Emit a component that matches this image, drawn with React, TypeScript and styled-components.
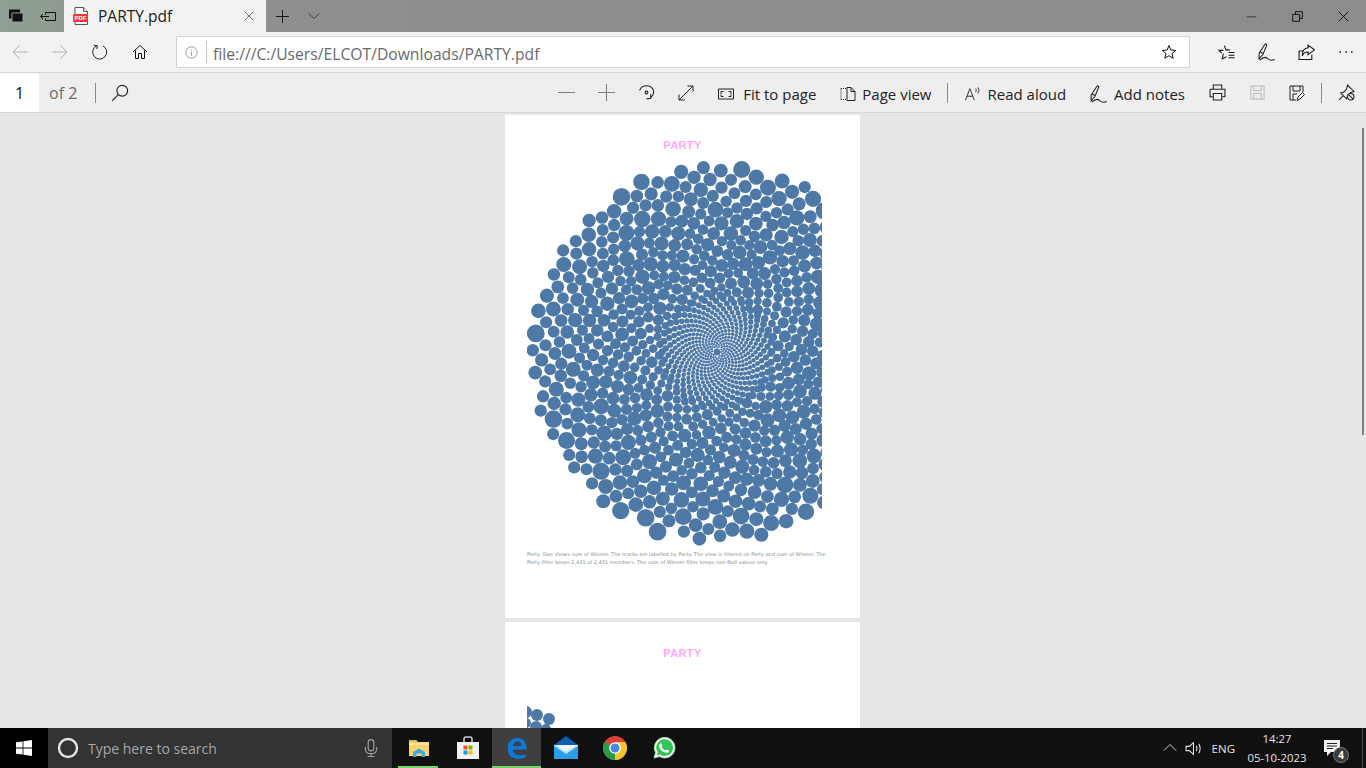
import * as React from 'react';
import styled, { createGlobalStyle } from 'styled-components';

// --- Styled Components ---

const GlobalStyle = createGlobalStyle`
  html, body {
    margin: 0;
    padding: 0;
    height: 100%;
    overflow: hidden;
    background: #e6e6e6;
  }
  * { box-sizing: border-box; }
`;

const Screen = styled.div`
  width: 1366px;
  height: 768px;
  display: flex;
  flex-direction: column;
  overflow: hidden;
  font-family: "Open Sans", "Noto Sans", sans-serif;
`;

const TitleBar = styled.div`
  height: 32px;
  flex: none;
  display: flex;
  align-items: stretch;
  background: linear-gradient(90deg, #8f9f92 0, #8f9b90 64px, #8e8e8e 300px, #8c8c8c 100%);
`;

const TabButton = styled.div<{ $w?: number }>`
  width: ${p => p.$w ?? 32}px;
  display: flex;
  align-items: center;
  justify-content: center;
  flex: none;
`;

const Tab = styled.div`
  width: 202px;
  background: #f2f2f2;
  display: flex;
  align-items: center;
  padding: 0 11px 0 9px;
  flex: none;
`;

const TabTitle = styled.span`
  margin-left: 9px;
  font-size: 15.5px;
  color: #222;
  flex: 1;
`;

const WindowControls = styled.div`
  margin-left: auto;
  display: flex;
`;

const NavBar = styled.div`
  height: 41px;
  flex: none;
  background: #f2f2f2;
  display: flex;
  align-items: center;
  border-bottom: 1px solid #d4d4d4;
`;

const NavButton = styled.div`
  width: 40px;
  height: 32px;
  flex: none;
  display: flex;
  align-items: center;
  justify-content: center;
`;

const AddressBox = styled.div`
  width: 1014px;
  height: 32px;
  flex: none;
  margin-left: 16px;
  margin-right: 16px;
  background: #fff;
  border: 1px solid #d2d2d2;
  display: flex;
  align-items: center;
  padding: 0 12px 0 8px;
`;

const AddressDivider = styled.div`
  width: 1px;
  height: 22px;
  background: #c4c4c4;
  margin: 0 6px 0 8px;
`;

const AddressText = styled.span`
  flex: 1;
  padding-top: 3px;
  font-size: 15.7px;
  color: #6a6a6a;
`;

const PdfBar = styled.div`
  height: 40px;
  flex: none;
  background: #eeeeee;
  display: flex;
  align-items: stretch;
  border-bottom: 1px solid #d6d6d6;
`;

const PageInput = styled.div`
  width: 39px;
  background: #fff;
  display: flex;
  align-items: center;
  justify-content: center;
  font-size: 16px;
  color: #111;
`;

const PageCount = styled.span`
  align-self: center;
  margin-left: 10px;
  font-size: 16px;
  color: #6b6b6b;
`;

const BarDivider = styled.div<{ $m?: string }>`
  width: 1px;
  height: 20px;
  align-self: center;
  background: #8a8a8a;
  margin: ${p => p.$m ?? '0'};
`;

const BarSpacer = styled.div`
  flex: 1;
`;

const PdfIcon = styled.div`
  width: 40px;
  flex: none;
  display: flex;
  align-items: center;
  justify-content: center;
`;

const PdfAction = styled.div<{ $l?: number; $r?: number; $gap?: number }>`
  display: flex;
  align-items: center;
  gap: ${p => p.$gap ?? 6}px;
  padding: 2px ${p => p.$r ?? 12}px 0 ${p => p.$l ?? 10}px;
  font-size: 15px;
  color: #222;
  flex: none;
`;

const Viewer = styled.main`
  position: relative;
  flex: 1;
  min-height: 0;
  background: #e6e6e6;
  display: flex;
  flex-direction: column;
  align-items: center;
  gap: 4px;
  padding: 2px 1px 0 0;
  overflow: hidden;
`;

const Scrollbar = styled.div`
  position: absolute;
  top: 15px;
  right: 2px;
  width: 2px;
  height: 307px;
  background: #808080;
`;

const Sheet = styled.section<{ $pad: number }>`
  width: 355px;
  height: 503px;
  flex: none;
  background: #fff;
  padding-top: ${p => p.$pad}px;
  display: flex;
  flex-direction: column;
`;

const SheetTitle = styled.h1`
  margin: 0;
  height: 11px;
  line-height: 11px;
  text-align: center;
  font-family: "Liberation Sans", Arial, sans-serif;
  font-weight: 700;
  font-size: 11px;
  letter-spacing: 0.4px;
  color: #ffa8ff;
`;

const ChartFrame = styled.div<{ $top: number; $h: number }>`
  width: 295px;
  height: ${p => p.$h}px;
  margin: ${p => p.$top}px 0 0 22px;
  flex: none;
  overflow: hidden;
`;

const Caption = styled.p`
  margin: 3px 0 0 22px;
  width: 310px;
  font-family: "DejaVu Sans", sans-serif;
  font-size: 5.05px;
  line-height: 8px;
  color: #8e8e8e;
`;

const Taskbar = styled.footer`
  height: 40px;
  flex: none;
  background: #101010;
  display: flex;
  align-items: stretch;
  color: #eee;
`;

const StartButton = styled.div`
  width: 48px;
  background: #000;
  display: flex;
  align-items: center;
  justify-content: center;
`;

const SearchBox = styled.div`
  width: 344px;
  margin-right: 2px;
  background: #333333;
  display: flex;
  align-items: center;
  padding: 0 12px 0 9px;
  flex: none;
`;

const SearchText = styled.span`
  flex: 1;
  margin-left: 9px;
  font-size: 14px;
  color: #a6a6a6;
`;

const TaskSlot = styled.div<{ $open?: boolean; $active?: boolean }>`
  position: relative;
  width: 49px;
  flex: none;
  display: flex;
  align-items: center;
  justify-content: center;
  background: ${p => (p.$active ? '#3f3f3f' : 'transparent')};
  &::after {
    content: '';
    display: ${p => (p.$open ? 'block' : 'none')};
    position: absolute;
    bottom: 0;
    left: ${p => (p.$active ? 0 : 4)}px;
    right: ${p => (p.$active ? 0 : 5)}px;
    height: 2px;
    background: #76d466;
  }
`;

const Tray = styled.div`
  margin-left: auto;
  display: flex;
  align-items: center;
  padding-right: 10px;
`;

const TrayChevron = styled.div`
  width: 14px;
  margin-right: 2px;
  display: flex;
`;

const TrayText = styled.span`
  font-size: 11.5px;
  color: #e6e6e6;
  margin: 0 9px 0 3px;
`;

const Clock = styled.div`
  width: 66px;
  text-align: center;
  font-size: 11.3px;
  line-height: 19px;
  color: #e6e6e6;
`;

const TrayBell = styled.div`
  position: relative;
  width: 46px;
  height: 40px;
  display: flex;
  align-items: center;
  justify-content: center;
`;

const ShowDesktop = styled.div`
  position: absolute;
  right: 3px;
  bottom: 0;
  width: 1px;
  height: 40px;
  background: #4a4a4a;
`;

const Badge = styled.span`
  position: absolute;
  left: 23px;
  top: 19px;
  width: 16px;
  height: 16px;
  border-radius: 50%;
  background: #3a3a3a;
  border: 1px solid #777;
  display: flex;
  align-items: center;
  justify-content: center;
  font-size: 10px;
  font-weight: 700;
  color: #fff;
`;

// --- Icons ---

type IconProps = { size?: number; color?: string; children: React.ReactNode; w?: number };

const Line = ({ size = 16, color = '#222', w = 1, children }: IconProps) => (
  <svg width={size} height={size} viewBox="0 0 16 16" fill="none" stroke={color} strokeWidth={w}>
    {children}
  </svg>
);

const PenIcon = ({ color = '#222' }: { color?: string }) => (
  <Line size={20} color={color} w={0.85}>
    <path d="M2.5 13.5 L2.5 9 L7 2 Q8.5 0.8 8.6 2.5 L5.5 10 L2.5 13.5 Z M3.6 8 L5.8 9.4" />
    <path d="M3 14.5 Q7 11 9 13 Q11 15.5 15 14" />
  </Line>
);

const StarPath = 'M8 1.5 L9.9 6 L14.7 6.4 L11 9.5 L12.2 14.3 L8 11.7 L3.8 14.3 L5 9.5 L1.3 6.4 L6.1 6 Z';

const PdfFileIcon = () => (
  <svg width="16" height="18" viewBox="0 0 16 18">
    <path d="M2 .5 H10.5 L14.5 4.5 V17.5 H2 Z" fill="#fff" stroke="#555" strokeWidth="1" />
    <path d="M10.5 .5 V4.5 H14.5" fill="#eee" stroke="#555" strokeWidth="1" />
    <rect x="0" y="7" width="15" height="8" rx="1" fill="#f03a3a" />
    <text x="7.5" y="13.4" textAnchor="middle" fontFamily="Liberation Sans, sans-serif" fontWeight="700" fontSize="6" fill="#fff">
      PDF
    </text>
  </svg>
);

const WindowsLogo = () => (
  <svg width="16" height="16" viewBox="0 0 16 16" fill="#fff">
    <path d="M0 2.3 L6.6 1.4 V7.5 H0 Z M7.4 1.3 L16 0 V7.5 H7.4 Z M0 8.4 H6.6 V14.6 L0 13.7 Z M7.4 8.4 H16 V16 L7.4 14.7 Z" />
  </svg>
);

const FolderIcon = () => (
  <svg width="22" height="20" viewBox="0 0 22 20">
    <path d="M1 2 H8 L10 4 H21 V18 H1 Z" fill="#f6d36b" />
    <path d="M1 2 H8 L9 3.5 H1 Z" fill="#e0b23c" />
    <rect x="1" y="5" width="20" height="2" fill="#fbe7a2" />
    <path d="M5 19 V14 L11 10.5 L17 14 V19 H13.5 V15.5 H8.5 V19 Z" fill="#3fa9e0" />
  </svg>
);

const StoreIcon = () => (
  <svg width="24" height="24" viewBox="0 0 24 24">
    <path d="M8 7 V3 Q8 1 10 1 H14 Q16 1 16 3 V7" fill="none" stroke="#cfcfcf" strokeWidth="1.5" />
    <rect x="1" y="6" width="22" height="17" fill="#f1f1f1" />
    <rect x="7.5" y="9.5" width="4" height="4" fill="#f25022" />
    <rect x="12.5" y="9.5" width="4" height="4" fill="#7fba00" />
    <rect x="7.5" y="14.5" width="4" height="4" fill="#00a4ef" />
    <rect x="12.5" y="14.5" width="4" height="4" fill="#ffb900" />
  </svg>
);

const EdgeIcon = () => (
  <svg width="22" height="24" viewBox="0 0 22 24" fill="none">
    <path d="M2 13 C1 6 6 2 12 2 C18 2 21 7 20.5 13.5 H7 C7 18 12 21 19.5 18 V21.5 C11 25 1.5 22 2 13 Z M7.2 10 H15.5 C15.5 6.5 13 5.5 11.5 5.5 C9.5 5.5 7.8 7 7.2 10 Z" fill="#0f78d4" />
  </svg>
);

const MailIcon = () => (
  <svg width="24" height="24" viewBox="0 0 24 24">
    <path d="M0 9 L12 0 L24 9 V12 H0 Z" fill="#0a5fae" />
    <rect x="0" y="9" width="24" height="14" fill="#2a9fe6" />
    <path d="M0 9 L12 16 L24 9 V10 L12 18 L0 10 Z" fill="#bfe4fa" />
    <path d="M0 9 H24 L12 16 Z" fill="#e9f6fe" />
  </svg>
);

const ChromeIcon = () => (
  <svg width="24" height="24" viewBox="0 0 24 24">
    <circle cx="12" cy="12" r="12" fill="#dc4437" />
    <path d="M12 12 L1.6 6 A12 12 0 0 0 12 24 Z" fill="#2a9d4b" />
    <path d="M12 12 L12 24 A12 12 0 0 0 22.4 6 L12 6 Z" fill="#f7c52c" />
    <circle cx="12" cy="12" r="5.8" fill="#fff" />
    <circle cx="12" cy="12" r="4.5" fill="#4a86e8" />
  </svg>
);

const WhatsAppIcon = () => (
  <svg width="24" height="24" viewBox="0 0 24 24">
    <path d="M2 22 L3.6 16.6 A10.3 10.3 0 1 1 7.5 20.6 Z" fill="#fff" stroke="#9fd8a8" strokeWidth="1" />
    <path d="M4.6 19.4 L5.6 16.2 A8.4 8.4 0 1 1 8 18.6 Z" fill="#36c559" />
    <path d="M9 7 L10.4 9.6 L9.6 11 Q11 13.6 13.4 14.6 L15 13.6 L17.2 15 Q16.5 17.2 14 16.8 Q8 15.4 7 10 Q7 8 9 7 Z" fill="#fff" />
  </svg>
);

// --- Chart data ---

type Bubble = { x: number; y: number; r: number };

// seeded so the same picture comes out on each load
const makeRandom = (seed: number) => () => {
  seed = (seed * 1664525 + 1013904223) % 4294967296;
  return seed / 4294967296;
};

const spacingAt = (radius: number) => {
  if (radius < 40) return 2 + radius * 0.07;
  if (radius < 75) return 4.8 + (radius - 40) * 0.16;
  return Math.min(14, 10.4 + (radius - 75) * 0.03);
};

function buildBubbles(): Bubble[] {
  const random = makeRandom(71);
  const golden = Math.PI * (3 - Math.sqrt(5));
  const out: Bubble[] = [{ x: 0, y: 0, r: 3.5 }];
  let radius = 4.2;
  let angle = 0;
  while (radius < 183) {
    const s = spacingAt(radius);
    const spread = radius > 60 ? Math.pow(random(), 2.2) * 0.42 - 0.06 : 0;
    out.push({
      x: Math.cos(angle) * radius,
      y: Math.sin(angle) * radius,
      r: (s / 2) * (0.96 + spread),
    });
    radius += (s * s * 0.92) / (2 * Math.PI * radius);
    angle += golden;
  }
  // push overlapping marks apart so the outer rings lose the spiral look
  for (let pass = 0; pass < 7; pass++) {
    for (let i = 0; i < out.length; i++) {
      for (let j = i + 1; j < out.length; j++) {
        const a = out[i];
        const b = out[j];
        const dx = b.x - a.x;
        const dy = b.y - a.y;
        const reach = a.r + b.r + 0.3;
        if (Math.abs(dx) > reach || Math.abs(dy) > reach) continue;
        const d = Math.sqrt(dx * dx + dy * dy) || 1;
        if (d >= reach || Math.hypot(a.x, a.y) < 55) continue;
        const push = (reach - d) / 2 / d;
        a.x -= dx * push;
        a.y -= dy * push;
        b.x += dx * push;
        b.y += dy * push;
      }
    }
  }
  return out;
}

const bubbles = buildBubbles();

const CENTER_X = 190;
const CENTER_Y = 195;

const secondPageBubbles: Bubble[] = [
  { x: -1, y: 8, r: 6 },
  { x: 10, y: 11, r: 6 },
  { x: 22, y: 15, r: 6 },
  { x: -1, y: 19, r: 5 },
  { x: 9, y: 23, r: 6 },
  { x: 19, y: 25, r: 5 },
];

function App() {
  return (
    <Screen>
      <GlobalStyle />
      <TitleBar>
        <TabButton>
          <svg width="16" height="16" viewBox="0 0 16 16">
            <rect x="1" y="1.5" width="11" height="9" fill="#111" />
            <rect x="4" y="5" width="11" height="9" fill="#111" stroke="#8f9f92" strokeWidth="1" />
          </svg>
        </TabButton>
        <TabButton>
          <Line size={16} color="#111">
            <path d="M5.5 4.5 H15.5 V12.5 H5.5 M0.5 8.5 H9 M3 6 L0.5 8.5 L3 11 M5.5 4.5 V6.5 M5.5 10.5 V12.5" />
          </Line>
        </TabButton>
        <Tab>
          <PdfFileIcon />
          <TabTitle>PARTY.pdf</TabTitle>
          <Line size={12} color="#444">
            <path d="M2 2 L14 14 M14 2 L2 14" />
          </Line>
        </Tab>
        <TabButton>
          <Line size={15} color="#111">
            <path d="M8 1 V15 M1 8 H15" />
          </Line>
        </TabButton>
        <TabButton>
          <Line size={14} color="#333">
            <path d="M2 5 L8 11 L14 5" />
          </Line>
        </TabButton>
        <WindowControls>
          <TabButton $w={46}>
            <Line size={11} color="#111">
              <path d="M1 8.5 H15" />
            </Line>
          </TabButton>
          <TabButton $w={46}>
            <Line size={11} color="#111" w={1.4}>
              <path d="M1 5 H11 V15 H1 Z M5 5 V1 H15 V11 H11" />
            </Line>
          </TabButton>
          <TabButton $w={46}>
            <Line size={11} color="#111" w={1.4}>
              <path d="M1 1 L15 15 M15 1 L1 15" />
            </Line>
          </TabButton>
        </WindowControls>
      </TitleBar>

      <NavBar>
        <NavButton>
          <Line size={16} color="#b0b0b0">
            <path d="M15.5 8 H1 M7.5 1.5 L1 8 L7.5 14.5" />
          </Line>
        </NavButton>
        <NavButton>
          <Line size={16} color="#b0b0b0">
            <path d="M0.5 8 H15 M8.5 1.5 L15 8 L8.5 14.5" />
          </Line>
        </NavButton>
        <NavButton>
          <Line size={16} color="#222">
            <path d="M5 1.6 A7 7 0 1 0 11 1.9 M1.8 1.2 L5.3 1.6 L4.8 5" />
          </Line>
        </NavButton>
        <NavButton>
          <Line size={16} color="#111">
            <path d="M1 8 L8 1.5 L15 8 M3.5 6.5 V14.5 H6.5 V9.5 H9.5 V14.5 H12.5 V6.5" />
          </Line>
        </NavButton>
        <AddressBox>
          <Line size={13} color="#888">
            <circle cx="8" cy="8" r="7" />
            <path d="M8 7 V12 M8 4 V5.4" />
          </Line>
          <AddressDivider />
          <AddressText>file:///C:/Users/ELCOT/Downloads/PARTY.pdf</AddressText>
          <Line size={16} color="#111">
            <path d={StarPath} />
          </Line>
        </AddressBox>
        <NavButton>
          <Line size={17} color="#111">
            <path d="M6 1.5 L7.5 5.5 H11 M3.5 8.5 L1 6 H5 M5 9 L4 14 L8 12 M10 8 H15.5 M10 10.5 H15.5 M10 13 H15.5" />
          </Line>
        </NavButton>
        <NavButton>
          <PenIcon />
        </NavButton>
        <NavButton>
          <Line size={17} color="#111">
            <path d="M1 6.5 V14.5 H13 V10 M1 6.5 H5 M9.5 1 L15.5 5.5 L9.5 10 V7.5 Q5.5 7.5 4 11 Q4 4 9.5 3.5 Z" />
          </Line>
        </NavButton>
        <NavButton>
          <Line size={16} color="#111" w={1.5}>
            <path d="M1.5 8 H3 M7.3 8 H8.8 M13 8 H14.5" />
          </Line>
        </NavButton>
      </NavBar>

      <PdfBar>
        <PageInput>1</PageInput>
        <PageCount>of 2</PageCount>
        <BarDivider $m="0 4px 0 18px" />
        <PdfIcon>
          <Line size={18} color="#222">
            <circle cx="10" cy="6" r="4.8" />
            <path d="M6.5 9.5 L1 15" />
          </Line>
        </PdfIcon>
        <BarSpacer />
        <PdfIcon>
          <Line size={17} color="#808080">
            <path d="M0 8 H16" />
          </Line>
        </PdfIcon>
        <PdfIcon>
          <Line size={17} color="#808080">
            <path d="M0 8 H16 M8 0 V16" />
          </Line>
        </PdfIcon>
        <PdfIcon>
          <Line size={17} color="#222">
            <path d="M1.5 6 A7 7 0 0 1 14.5 6 Q15.5 10 12 13 M12 9.5 V13.5 L8 14" />
            <circle cx="8" cy="8" r="1.3" />
          </Line>
        </PdfIcon>
        <PdfIcon>
          <Line size={16} color="#222">
            <path d="M1 15 L15 1 M9.5 1 H15 V6.5 M1 9.5 V15 H6.5" />
          </Line>
        </PdfIcon>
        <PdfAction $l={12} $r={14} $gap={9}>
          <Line size={16} color="#222">
            <path d="M.5 3 H15.5 V13 H.5 Z" />
            <path d="M3 8 V5.5 H5.5 M10.5 5.5 H13 V8 M13 8.5 V10.5 H10.5 M5.5 10.5 H3 V8.5" />
          </Line>
          Fit to page
        </PdfAction>
        <PdfAction>
          <Line size={16} color="#222">
            <path d="M1 2.5 H6 M1 2.5 V13.5 M1 13.5 H6" strokeDasharray="1 1" />
            <path d="M7 1.5 H11 L15 5.5 V14.5 H7 Z M11 1.5 V5.5 H15" />
          </Line>
          Page view
        </PdfAction>
        <BarDivider $m="0 7px 0 4px" />
        <PdfAction>
          <svg width="16" height="16" viewBox="0 0 18 16" fill="none" stroke="#222">
            <path d="M.5 15 L5.5 2 L10.5 15 M2.2 10.5 H8.8 M12 2 Q13.5 4 12 6 M14.5 .5 Q17 4 14.5 7.5" />
          </svg>
          Read aloud
        </PdfAction>
        <PdfAction>
          <PenIcon />
          Add notes
        </PdfAction>
        <PdfIcon>
          <Line size={17} color="#222">
            <path d="M4 5 V1 H12 V5 M1 5 H15 V12 H12 M4 12 H1 V5 M4 9 H12 V15 H4 Z" />
          </Line>
        </PdfIcon>
        <PdfIcon>
          <Line size={15} color="#b4b4b4">
            <path d="M1 1 H15 V15 H1 Z M4 1 V6 H12 V1 M4 15 V9 H12 V15" />
          </Line>
        </PdfIcon>
        <PdfIcon>
          <Line size={16} color="#222">
            <path d="M1 1 H14 V7 M1 1 V15 H7 M4 1 V6 H11 V1 M4 15 V9 H8" />
            <path d="M8 15.5 L9 12 L13.5 7.5 L15.5 9.5 L11 14 Z" />
          </Line>
        </PdfIcon>
        <BarDivider $m="0 4px 0 4px" />
        <PdfIcon>
          <Line size={17} color="#222">
            <path d="M9 1 L15 7 L12 8 L9 11 L8 14 L2.5 8.5 L5.5 7.5 L8 5 Z M5 11 L1 15" />
            <circle cx="12" cy="12" r="3" fill="#eee" />
            <path d="M10 10 L14 14" />
          </Line>
        </PdfIcon>
      </PdfBar>

      <Viewer>
        <Sheet $pad={25}>
          <SheetTitle>PARTY</SheetTitle>
          <ChartFrame $top={6} $h={390}>
            <svg width="295" height="390" viewBox="0 0 295 390" fill="#4e79a7">
              {bubbles.map((b, i) => (
                <circle key={i} cx={CENTER_X + b.x} cy={CENTER_Y + b.y} r={b.r} />
              ))}
            </svg>
          </ChartFrame>
          <Caption>
            Party. Size shows sum of Winner. The marks are labelled by Party. The view is filtered on Party and sum of
            Winner. The Party filter keeps 2,431 of 2,431 members. The sum of Winner filter keeps non-Null values only.
          </Caption>
        </Sheet>
        <Sheet $pad={26}>
          <SheetTitle>PARTY</SheetTitle>
          <ChartFrame $top={45} $h={60}>
            <svg width="295" height="60" viewBox="0 0 295 60" fill="#4e79a7">
              {secondPageBubbles.map((b, i) => (
                <circle key={i} cx={b.x} cy={b.y} r={b.r} />
              ))}
            </svg>
          </ChartFrame>
        </Sheet>
        <Scrollbar />
      </Viewer>

      <Taskbar>
        <StartButton>
          <WindowsLogo />
        </StartButton>
        <SearchBox>
          <svg width="22" height="22" viewBox="0 0 22 22" fill="none" stroke="#e4e4e4" strokeWidth="2.4">
            <circle cx="11" cy="11" r="9" />
          </svg>
          <SearchText>Type here to search</SearchText>
          <Line size={18} color="#a0a0a0">
            <rect x="5.5" y=".5" width="5" height="10" rx="2.5" />
            <path d="M3 7 V9 Q3 13 8 13 Q13 13 13 9 V7 M8 13 V15.5 M5 15.5 H11" />
          </Line>
        </SearchBox>
        <TaskSlot $open>
          <FolderIcon />
        </TaskSlot>
        <TaskSlot>
          <StoreIcon />
        </TaskSlot>
        <TaskSlot $open $active>
          <EdgeIcon />
        </TaskSlot>
        <TaskSlot>
          <MailIcon />
        </TaskSlot>
        <TaskSlot>
          <ChromeIcon />
        </TaskSlot>
        <TaskSlot>
          <WhatsAppIcon />
        </TaskSlot>
        <Tray>
          <TrayChevron>
            <Line size={14} color="#e6e6e6">
              <path d="M1 11 L8 4 L15 11" />
            </Line>
          </TrayChevron>
          <TabButton $w={30}>
            <Line size={17} color="#e6e6e6">
              <path d="M1 6 H4 L8 2.5 V13.5 L4 10 H1 Z M10.5 5.5 Q12 8 10.5 10.5 M13 3.5 Q15.5 8 13 12.5" />
            </Line>
          </TabButton>
          <TrayText>ENG</TrayText>
          <Clock>
            14:27
            <br />
            05-10-2023
          </Clock>
          <TrayBell>
            <svg width="18" height="18" viewBox="0 0 18 18" fill="#f2f2f2">
              <path d="M0 1 H16 V13 H7 L3 17 V13 H0 Z" />
              <path d="M3 4.5 H13 M3 7 H13 M3 9.5 H9" stroke="#222" strokeWidth="1" />
            </svg>
            <Badge>4</Badge>
          </TrayBell>
          <ShowDesktop />
        </Tray>
      </Taskbar>
    </Screen>
  );
}

export default App;
